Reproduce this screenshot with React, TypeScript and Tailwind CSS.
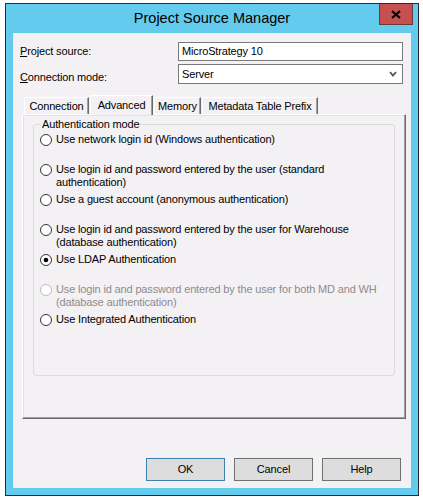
import { useState } from 'react';

/* ==========================================================
   data
   ========================================================== */
type Option = { id: string; lines: string[]; disabled?: boolean };

const OPTIONS: Option[] = [
  { id: 'windows', lines: ['Use network login id (Windows authentication)'] },
  { id: 'standard', lines: ['Use login id and password entered by the user (standard', 'authentication)'] },
  { id: 'guest', lines: ['Use a guest account (anonymous authentication)'] },
  { id: 'warehouse', lines: ['Use login id and password entered by the user for Warehouse', '(database authentication)'] },
  { id: 'ldap', lines: ['Use LDAP Authentication'] },
  { id: 'both', lines: ['Use login id and password entered by the user for both MD and WH', '(database authentication)'], disabled: true },
  { id: 'integrated', lines: ['Use Integrated Authentication'] },
];

const TABS = [
  { label: 'Connection', w: 'w-[65px]' },
  { label: 'Advanced', w: 'w-[63px]' },
  { label: 'Memory', w: 'w-[47px]' },
  { label: 'Metadata Table Prefix', w: 'w-[116px]' },
];

/* ==========================================================
   small pieces
   ========================================================== */
function Radio({ checked, disabled }: { checked: boolean; disabled?: boolean }) {
  return (
    <svg width="12" height="12" viewBox="0 0 12 12" className="shrink-0">
      <circle cx="6" cy="6" r="5.5" fill="#ffffff" stroke={disabled ? '#bcbcbc' : '#333333'} />
      {checked && <circle cx="6" cy="6" r="2.3" fill="#000000" />}
    </svg>
  );
}

function DialogButton({ label, primary }: { label: string; primary?: boolean }) {
  return (
    <button
      className={`w-[79px] h-[23px] bg-[#dddddd] border text-black
                  ${primary ? 'border-[#3c7fb1]' : 'border-[#707070]'}`}
    >
      {label}
    </button>
  );
}

/* ==========================================================
   app
   ========================================================== */
export default function App() {
  const [mode, setMode] = useState('ldap');
  const [tab, setTab] = useState('Advanced');

  return (
    <div
      className="min-h-[498px] bg-white pt-[3px] pl-[5px] text-[11px] tracking-[-0.15px] text-black"
      style={{ fontFamily: '"Liberation Sans", Arial, sans-serif' }}
    >
      {/* window frame */}
      <div className="w-[414px] h-[493px] border border-[#2b2b2b] bg-[#63cbee] flex flex-col">
        {/* title bar */}
        <div className="relative h-[29px] flex items-center justify-center">
          <span className="text-[14.5px] tracking-normal pt-[1px]">Project Source Manager</span>
          <button className="absolute right-[5px] top-0 w-[34px] h-[21px] bg-[#c75050] border border-t-0 border-[#6b3a3a] flex items-center justify-center">
            <svg width="10" height="9" viewBox="0 0 10 9">
              <path d="M1 1 L9 8 M9 1 L1 8" stroke="#000" strokeWidth="2.2" />
            </svg>
          </button>
        </div>

        {/* client area */}
        <div className="mx-[7px] h-[455px] bg-[#f4f1f4] flex flex-col">
          {/* project source */}
          <div className="mt-[9px] h-[19px] flex items-center">
            <span className="w-[165px] pl-[7px]">
              <span className="underline underline-offset-1">P</span>roject source:
            </span>
            <div className="w-[225px] h-[19px] border border-[#7a7a7a] bg-white flex items-center pl-[3px]">
              MicroStrategy 10
            </div>
          </div>

          {/* connection mode */}
          <div className="mt-[3px] h-[20px] flex items-center">
            <span className="w-[165px] pl-[7px] pt-[6px]">
              <span className="underline underline-offset-1">C</span>onnection mode:
            </span>
            <div className="w-[225px] h-[20px] border border-[#7a7a7a] bg-white flex items-center justify-between pl-[3px] pr-[5px]">
              <span>Server</span>
              <svg width="8" height="6" viewBox="0 0 8 6">
                <path d="M1 1 L4 4.5 L7 1" stroke="#555" strokeWidth="1.8" fill="none" />
              </svg>
            </div>
          </div>

          {/* tabs */}
          <div className="mt-[11px] ml-[11px] h-[19px] flex items-end">
            {TABS.map((t) => {
              const active = t.label === tab;
              return (
                <button
                  key={t.label}
                  onClick={() => setTab(t.label)}
                  className={`${t.w} relative flex items-center justify-center bg-[#f4f1f4]
                              border-l border-t border-r border-l-white border-t-white border-r-[#696969]
                              shadow-[inset_-1px_0_0_#a0a0a0] mr-px
                              ${active ? 'h-[20px] -mb-px z-10 pb-[1px]' : 'h-[17px]'}`}
                >
                  {t.label}
                </button>
              );
            })}
          </div>

          {/* tab panel */}
          <div className="ml-[9px] w-[384px] h-[305px] border border-l-white border-t-white border-r-[#696969] border-b-[#696969] shadow-[inset_-1px_-1px_0_#a0a0a0,inset_1px_1px_0_#e3e3e3] px-[10px] pt-[3px]">
            <fieldset className="h-[258px] border border-[#dcdcdc] rounded-[3px] px-[6px]">
              <legend className="ml-[1px] px-[1px] leading-[13px]">Authentication mode</legend>
              <div className="flex flex-col pt-[2px]">
                {OPTIONS.map((o) => (
                  <label
                    key={o.id}
                    onClick={() => !o.disabled && setMode(o.id)}
                    className={`h-[30px] flex items-start gap-[4px] leading-[13px]
                                ${o.disabled ? 'text-[#8c8c8c]' : ''}`}
                  >
                    <span className="pt-[1px]">
                      <Radio checked={mode === o.id} disabled={o.disabled} />
                    </span>
                    <span>
                      {o.lines.map((l) => (
                        <div key={l}>{l}</div>
                      ))}
                    </span>
                  </label>
                ))}
              </div>
            </fieldset>
          </div>

          {/* buttons */}
          <div className="mt-[39px] ml-[133px] flex gap-[9px]">
            <DialogButton label="OK" primary />
            <DialogButton label="Cancel" />
            <DialogButton label="Help" />
          </div>
        </div>
      </div>
    </div>
  );
}
